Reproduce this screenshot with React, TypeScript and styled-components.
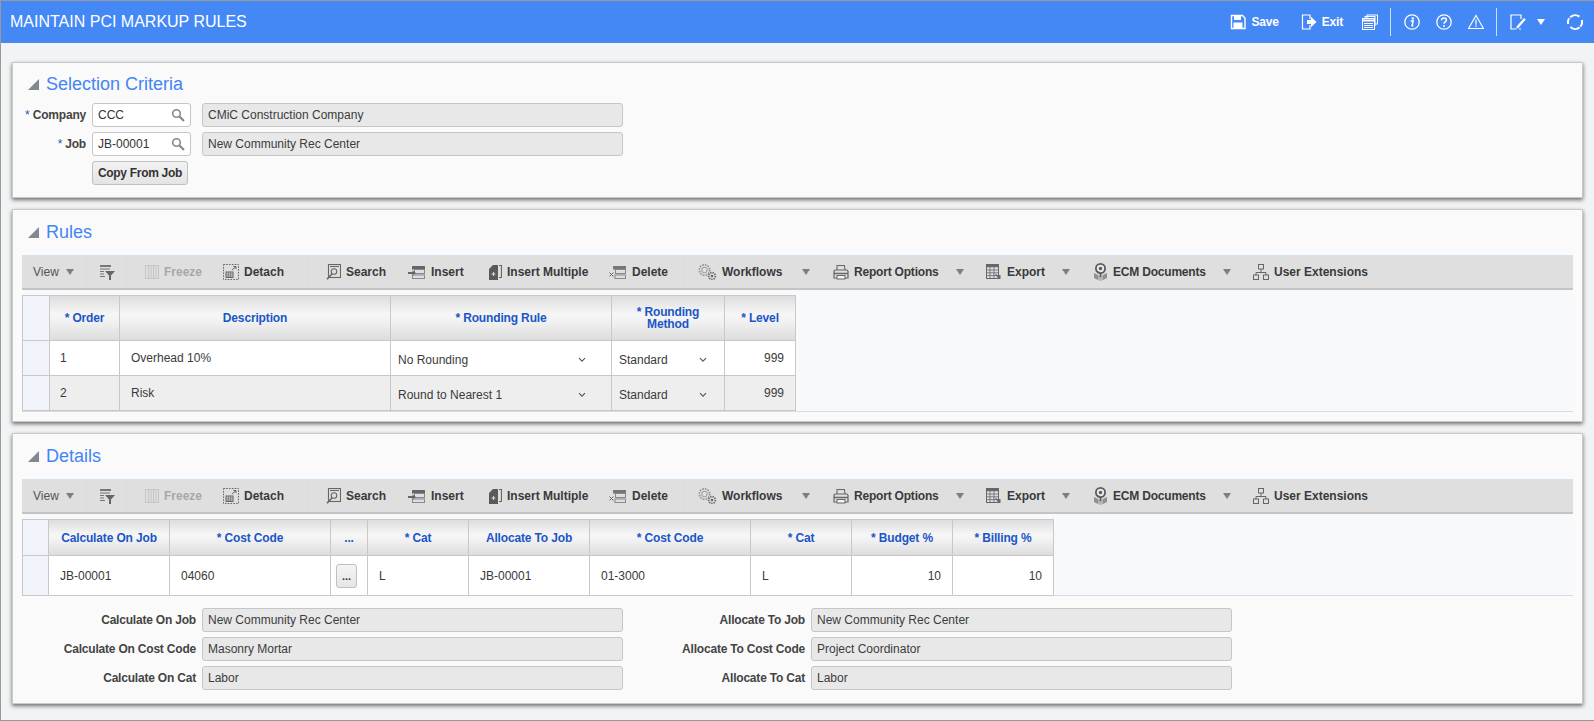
import React from "react";
import styled, { createGlobalStyle } from "styled-components";

const GlobalStyle = createGlobalStyle`
  html, body {
    margin: 0;
    padding: 0;
    background: #f1f3f4;
  }
  body {
    font-family: "Liberation Sans", Arial, sans-serif;
    font-size: 12px;
    color: #333;
  }
  * { box-sizing: border-box; }
`;

const Page = styled.div`
  width: 1594px;
  height: 721px;
  overflow: hidden;
  display: flex;
  flex-direction: column;
  background: #f1f3f4;
  border-left: 1px solid #999;
  border-top: 1px solid #999;
  border-bottom: 1px solid #999;
`;

const Header = styled.header`
  height: 42px;
  flex: none;
  display: flex;
  align-items: center;
  justify-content: space-between;
  padding: 0 11px 0 9px;
  background: #4488f6;
  color: #fff;
`;

const Title = styled.h1`
  margin: 0;
  font-size: 16px;
  font-weight: 400;
`;

const Actions = styled.div`
  display: flex;
  align-items: center;
`;

const HeadItem = styled.span<{ $ml?: number }>`
  display: flex;
  align-items: center;
  margin-left: ${(p) => p.$ml ?? 0}px;
  font-weight: 700;
  font-size: 12px;
  letter-spacing: -0.2px;
`;

const HeadSep = styled.span<{ $ml: number }>`
  width: 1px;
  height: 28px;
  margin-left: ${(p) => p.$ml}px;
  background: #cfe0fb;
`;

const Content = styled.main`
  flex: 1;
  display: flex;
  flex-direction: column;
  gap: 11px;
  padding: 19px 11px 0 11px;
`;

const Panel = styled.section<{ $h: number }>`
  height: ${(p) => p.$h}px;
  flex: none;
  padding: 0 9px;
  background: #fafafa;
  border: 1px solid #c9c9c9;
  box-shadow: 0 2px 4px rgba(0, 0, 0, 0.55);
`;

const PanelHead = styled.div<{ $h: number; $pt?: number }>`
  height: ${(p) => p.$h}px;
  display: flex;
  align-items: center;
  gap: 7px;
  padding: ${(p) => p.$pt ?? 0}px 0 0 6px;
  font-size: 18px;
  color: #4285f4;
`;

const Collapse = styled.span`
  width: 0;
  height: 0;
  border-style: solid;
  border-width: 0 0 11px 11px;
  border-color: transparent transparent #808890 transparent;
`;

const FormRows = styled.div`
  display: flex;
  flex-direction: column;
  gap: 5px;
`;

const Row = styled.div`
  display: flex;
  align-items: center;
  height: 24px;
`;

const Label = styled.label<{ $w: number }>`
  width: ${(p) => p.$w}px;
  flex: none;
  margin-right: 6px;
  text-align: right;
  font-weight: 700;
  letter-spacing: -0.2px;
  color: #444;
  white-space: nowrap;
  em {
    font-style: normal;
    font-weight: 400;
    color: #1f55b8;
  }
`;

const LovInput = styled.div`
  width: 99px;
  height: 24px;
  margin-right: 11px;
  flex: none;
  display: flex;
  align-items: center;
  justify-content: space-between;
  padding: 0 5px 0 5px;
  background: #fff;
  border: 1px solid #c6c6c6;
  border-radius: 3px;
  color: #333;
`;

const ReadOnly = styled.div`
  width: 421px;
  height: 24px;
  flex: none;
  display: flex;
  align-items: center;
  padding: 0 5px;
  background: #e8e8e8;
  border: 1px solid #c6c6c6;
  border-radius: 3px;
  color: #3c3c3c;
`;

const Button = styled.button`
  width: 96px;
  height: 24px;
  margin-left: 70px;
  padding: 0;
  background: linear-gradient(#f2f2f2, #e4e4e4);
  border: 1px solid #c0c0c0;
  border-radius: 3px;
  font-family: inherit;
  font-size: 12px;
  font-weight: 700;
  letter-spacing: -0.3px;
  color: #333;
`;

const Toolbar = styled.div`
  height: 35px;
  display: flex;
  align-items: center;
  padding-left: 11px;
  background: #dfdfdf;
  border-top: 1px solid #d3e2f2;
  border-bottom: 2px solid #c4c4c4;
`;

const Tool = styled.span<{ $w: number; $pad?: number; $off?: boolean; $plain?: boolean; $tight?: boolean }>`
  width: ${(p) => p.$w}px;
  flex: none;
  height: 100%;
  display: flex;
  align-items: center;
  gap: ${(p) => (p.$plain ? 0 : 5)}px;
  padding-left: ${(p) => p.$pad ?? 0}px;
  font-weight: ${(p) => (p.$plain ? 400 : 700)};
  letter-spacing: ${(p) => (p.$tight ? "-0.2px" : "normal")};
  color: ${(p) => (p.$off ? "#a8a8a8" : p.$plain ? "#555" : "#3a3a3a")};
`;

const ToolSep = styled.span`
  width: 1px;
  height: 100%;
  flex: none;
  background: #d5dde6;
`;

const Caret = styled.i<{ $ml: number; $color?: string; $w?: number }>`
  width: 0;
  height: 0;
  flex: none;
  margin-left: ${(p) => p.$ml}px;
  border-style: solid;
  border-width: 6px ${(p) => p.$w ?? 4}px 0 ${(p) => p.$w ?? 4}px;
  border-color: ${(p) => p.$color ?? "#7f7f7f"} transparent transparent transparent;
`;

const GridArea = styled.div<{ $h: number }>`
  height: ${(p) => p.$h}px;
  padding-top: 5px;
  background: #f7f9fd;
  border-bottom: 1px solid #d8dde3;
`;

const Table = styled.table`
  border-collapse: collapse;
  table-layout: fixed;
`;

const Th = styled.th<{ $h: number; $w: number }>`
  height: ${(p) => p.$h}px;
  width: ${(p) => p.$w}px;
  padding: 0 4px;
  background: linear-gradient(#dedede 0%, #f6f6f6 40%, #f2f2f2 55%, #dcdcdc 100%);
  border: 1px solid #c8c8c8;
  font-size: 12px;
  line-height: 12px;
  font-weight: 700;
  letter-spacing: -0.15px;
  color: #1a56c8;
`;

const Corner = styled.td<{ $w?: number }>`
  width: ${(p) => p.$w ?? 26}px;
  padding: 0;
  background: #f1f4fa;
  border: 1px solid #c8c8c8;
`;

const Td = styled.td<{ $h: number; $alt?: boolean; $right?: boolean; $pad?: number }>`
  height: ${(p) => p.$h}px;
  padding: 0 ${(p) => p.$pad ?? 11}px;
  background: ${(p) => (p.$alt ? "#eeeeee" : "#fff")};
  border: 1px solid #c8c8c8;
  text-align: ${(p) => (p.$right ? "right" : "left")};
  color: #3a3a3a;
`;

const SelectText = styled.div`
  display: flex;
  align-items: center;
  justify-content: space-between;
  padding-top: 3px;
`;

const EllipsisBtn = styled.button`
  display: block;
  width: 21px;
  height: 24px;
  margin: 0 0 0 5px;
  padding: 0;
  background: linear-gradient(#f4f4f4, #e6e6e6);
  border: 1px solid #c0c0c0;
  border-radius: 3px;
  font-size: 11px;
  font-weight: 700;
  color: #333;
`;

const Details = styled.div`
  display: grid;
  grid-template-columns: 600px 620px;
  margin-top: 12px;
  row-gap: 5px;
`;

const ChevronMark = styled.svg<{ $mr: number }>`
  flex: none;
  margin-right: ${(p) => p.$mr}px;
`;

const Svg = ({ w = 16, h = 16, children, c = "#666" }: { w?: number; h?: number; c?: string; children: React.ReactNode }) => (
  <svg width={w} height={h} viewBox={`0 0 ${w} ${h}`} fill="none" stroke={c} strokeWidth="1" style={{ flex: "none" }}>
    {children}
  </svg>
);

const Chevron = ({ mr }: { mr: number }) => (
  <ChevronMark $mr={mr} width="8" height="6" viewBox="0 0 8 6" fill="none" stroke="#555" strokeWidth="1.1">
    <path d="M1 1.2 4 4.2 7 1.2" />
  </ChevronMark>
);

const SearchGlass = () => (
  <Svg w={14} h={14} c="#888">
    <circle cx="5.5" cy="5.5" r="3.8" strokeWidth="1.6" />
    <path d="M8.5 8.5 13 13" strokeWidth="2.2" />
  </Svg>
);

const W = "#fff";

const SaveIcon = () => (
  <Svg c={W}>
    <path d="M1.5 1.5h11l2.5 2.5v10.5h-13.5z" strokeWidth="1.4" />
    <rect x="4" y="1.5" width="7" height="4.5" fill={W} stroke="none" />
    <rect x="3.5" y="8.5" width="9" height="6" fill={W} stroke="none" />
  </Svg>
);
const ExitIcon = () => (
  <Svg c={W}>
    <path d="M9 5V1H1.5v14H9v-4" strokeWidth="1.2" />
    <path d="M6 6h4V2.8L15.5 8 10 13.2V10H6z" fill={W} stroke="none" />
  </Svg>
);
const ReportsIcon = () => (
  <Svg c={W}>
    <rect x="5" y="1" width="10.5" height="9" />
    <rect x="3" y="2.5" width="10" height="9" />
    <rect x="0.5" y="4.5" width="12" height="11" fill="#4488f6" />
    <path d="M0.5 6.5h12" strokeWidth="2" />
    <path d="M2 9.5h9M2 11.5h9M2 13.5h9" />
  </Svg>
);
const InfoIcon = () => (
  <Svg c={W}>
    <circle cx="8" cy="8" r="7.2" strokeWidth="1.3" />
    <circle cx="8.8" cy="4.4" r="1.2" fill={W} stroke="none" />
    <path d="M6.6 7h2.6l-1.2 4.8h1.4" strokeWidth="1.5" />
  </Svg>
);
const HelpIcon = () => (
  <Svg c={W}>
    <circle cx="8" cy="8" r="7.2" strokeWidth="1.3" />
    <path d="M5.6 6.2C5.6 4.8 6.7 4 8 4s2.4.8 2.4 2.1c0 1.8-2.4 1.9-2.4 3.6" strokeWidth="1.6" />
    <circle cx="8" cy="12" r="1" fill={W} stroke="none" />
  </Svg>
);
const WarnIcon = () => (
  <Svg c={W}>
    <path d="M8 1.5 15.5 14.5H.5z" strokeWidth="1.2" />
    <path d="M8 5.5v5.2M8 11.6v1.5" strokeWidth="1.2" />
  </Svg>
);
const EditIcon = () => (
  <Svg c={W}>
    <path d="M11 5V1H1v14h5M9 15h2" strokeWidth="1.2" />
    <path d="M6 15l1-3 7-8 1.8 1.6-7 8z" fill={W} stroke="none" />
  </Svg>
);
const RefreshIcon = () => (
  <Svg c={W}>
    <path d="M3.2 3.2A7 7 0 0 1 12.4 2.6M14.8 6A7 7 0 0 1 13.4 12.6M12.6 13.4A7 7 0 0 1 3.4 13M1.2 10A7 7 0 0 1 2.2 4.2" strokeWidth="2" />
  </Svg>
);

const FilterIcon = () => (
  <Svg>
    <path d="M1 1h11v2H1z" fill="#777" stroke="none" />
    <path d="M1 5h10M1 7.5h4M1 10h4M1 12.5h5" strokeWidth="1.2" stroke="#777" />
    <path d="M6 7h10l-4 4.5V16h-2v-4.5z" fill="#666" stroke="none" />
  </Svg>
);
const FreezeIcon = () => (
  <Svg w={14} c="#c4c4c4">
    <rect x="0.5" y="1.5" width="13" height="13" />
    <path d="M3.5 2v12M6 2v12M8.5 2v12M11 2v12" />
  </Svg>
);
const DetachIcon = () => (
  <Svg>
    <rect x="0.5" y="0.5" width="15" height="15" strokeDasharray="1.6 1.2" />
    <path d="M9 6 13 2.5M10.5 2.5H13V5" />
    <rect x="3" y="8" width="7" height="5.5" />
    <path d="M3 10h7M3 12h7M5.3 8v5.5M7.6 8v5.5" strokeWidth="0.7" />
  </Svg>
);
const SearchDocIcon = () => (
  <Svg w={15}>
    <rect x="2.5" y="0.5" width="12" height="13" strokeWidth="1.1" />
    <path d="M4 2.5h9" />
    <circle cx="8" cy="7.5" r="2.8" strokeWidth="1.1" />
    <path d="M6 10 1 15.2" strokeWidth="1.6" />
  </Svg>
);
const InsertIcon = () => (
  <Svg w={18}>
    <rect x="4" y="2" width="13" height="3.5" fill="#666" stroke="none" />
    <rect x="6.5" y="5.5" width="10" height="4" stroke="#888" />
    <rect x="4.5" y="11" width="12" height="3.5" stroke="#888" />
    <path d="M0 9h5" strokeWidth="2" />
    <path d="M4.5 6.5 8 9l-3.5 2.5z" fill="#666" stroke="none" />
  </Svg>
);
const InsertMultipleIcon = () => (
  <Svg w={14}>
    <path d="M11 1.5h2.5v12H11" strokeWidth="1.2" />
    <path d="M1 5 5 1h5v15H1z" fill="#5a5a5a" stroke="none" />
    <path d="M5.5 8v4M3.5 10h4" stroke="#ddd" />
  </Svg>
);
const DeleteIcon = () => (
  <Svg w={18}>
    <rect x="4" y="2" width="13" height="3.5" fill="#777" stroke="none" />
    <rect x="6.5" y="5.5" width="10" height="4" stroke="#888" />
    <rect x="6" y="11" width="10.5" height="3.5" stroke="#888" />
    <path d="M0.5 8.5 4.5 12.5M4.5 8.5 0.5 12.5" />
  </Svg>
);
const WorkflowIcon = () => (
  <Svg w={19}>
    <circle cx="6.5" cy="6" r="5.2" stroke="#8f8f8f" strokeWidth="1.6" strokeDasharray="1.6 1.1" />
    <circle cx="6.5" cy="6" r="2.8" stroke="#8f8f8f" strokeWidth="0.9" />
    <circle cx="14" cy="12" r="3.4" stroke="#666" strokeWidth="1.6" strokeDasharray="1.4 .9" />
    <circle cx="14" cy="12" r="1.3" fill="#666" stroke="none" />
  </Svg>
);
const PrinterIcon = () => (
  <Svg>
    <path d="M4 6V1.5h7.5L12 6" strokeWidth="1.1" />
    <path d="M1 14V7.5Q1 6 2.5 6h11Q15 6 15 7.5V14z" strokeWidth="1.2" />
    <path d="M1 9.5h14" strokeWidth="1.5" />
    <rect x="4" y="11.5" width="8" height="3.5" fill="#f3f3f3" />
  </Svg>
);
const ExportIcon = () => (
  <Svg>
    <rect x="0.5" y="0.5" width="12" height="14" strokeWidth="1" />
    <path d="M0.5 2h12" strokeWidth="2.4" />
    <path d="M0.5 6h12M0.5 8.8h12M0.5 11.6h12M4 3v11.5M8 3v11.5" strokeWidth="0.8" />
    <path d="M9.5 10.5 14 14M13.8 11v3.2h-3" strokeWidth="1.4" />
  </Svg>
);
const EcmIcon = () => (
  <Svg w={15} h={18}>
    <path d="M1 10 5 12v5l-4-2zM14 10l-4 2v5l4-2z" fill="#8f8f8f" stroke="none" />
    <path d="M5 12l2.5 1.5L10 12v5l-2.5 1L5 17z" fill="#b5b5b5" stroke="none" />
    <circle cx="7.5" cy="5.5" r="4.6" strokeWidth="1.8" stroke="#5c5c5c" fill="#e8e8e8" />
    <circle cx="7.5" cy="5.5" r="1.7" fill="#5c5c5c" stroke="none" />
    <path d="M7.5 10v4" strokeWidth="1.8" stroke="#5c5c5c" />
  </Svg>
);
const ExtensionsIcon = () => (
  <Svg>
    <rect x="5.5" y="0.5" width="5" height="4.5" />
    <rect x="0.5" y="11" width="5" height="4.5" />
    <rect x="10.5" y="11" width="5" height="4.5" />
    <path d="M8 5v3.5M3 11V8.5h10V11" />
  </Svg>
);

function GridToolbar() {
  return (
    <Toolbar>
      <Tool $w={53} $plain>
        View
        <Caret $ml={7} />
      </Tool>
      <ToolSep />
      <Tool $w={39} $pad={12}>
        <FilterIcon />
      </Tool>
      <ToolSep />
      <Tool $w={96} $pad={18} $off>
        <FreezeIcon />
        Freeze
      </Tool>
      <Tool $w={85}>
        <DetachIcon />
        Detach
      </Tool>
      <ToolSep />
      <Tool $w={99} $pad={17}>
        <SearchDocIcon />
        Search
      </Tool>
      <Tool $w={80}>
        <InsertIcon />
        Insert
      </Tool>
      <Tool $w={121}>
        <InsertMultipleIcon />
        Insert Multiple
      </Tool>
      <Tool $w={74}>
        <DeleteIcon />
        Delete
      </Tool>
      <ToolSep />
      <Tool $w={149} $pad={14}>
        <WorkflowIcon />
        Workflows
        <Caret $ml={15} />
      </Tool>
      <Tool $w={153} $tight>
        <PrinterIcon />
        Report Options
        <Caret $ml={12} />
      </Tool>
      <Tool $w={107}>
        <ExportIcon />
        Export
        <Caret $ml={12} />
      </Tool>
      <Tool $w={160} $tight>
        <EcmIcon />
        ECM Documents
        <Caret $ml={12} />
      </Tool>
      <Tool $w={120}>
        <ExtensionsIcon />
        User Extensions
      </Tool>
    </Toolbar>
  );
}

const rules = [
  { order: 1, description: "Overhead 10%", rule: "No Rounding", method: "Standard", level: 999 },
  { order: 2, description: "Risk", rule: "Round to Nearest 1", method: "Standard", level: 999 },
];

const detailFields = [
  ["Calculate On Job", "New Community Rec Center", "Allocate To Job", "New Community Rec Center"],
  ["Calculate On Cost Code", "Masonry Mortar", "Allocate To Cost Code", "Project Coordinator"],
  ["Calculate On Cat", "Labor", "Allocate To Cat", "Labor"],
];

export default function App() {
  return (
    <>
      <GlobalStyle />
      <Page>
        <Header>
          <Title>MAINTAIN PCI MARKUP RULES</Title>
          <Actions>
            <HeadItem><SaveIcon /></HeadItem>
            <HeadItem $ml={6}>Save</HeadItem>
            <HeadItem $ml={22}><ExitIcon /></HeadItem>
            <HeadItem $ml={5}>Exit</HeadItem>
            <HeadItem $ml={19}><ReportsIcon /></HeadItem>
            <HeadSep $ml={12} />
            <HeadItem $ml={13}><InfoIcon /></HeadItem>
            <HeadItem $ml={16}><HelpIcon /></HeadItem>
            <HeadItem $ml={16}><WarnIcon /></HeadItem>
            <HeadSep $ml={12} />
            <HeadItem $ml={13}><EditIcon /></HeadItem>
            <Caret $ml={11} $color="#fff" $w={4.5} />
            <HeadItem $ml={22}><RefreshIcon /></HeadItem>
          </Actions>
        </Header>
        <Content>
          <Panel $h={136}>
            <PanelHead $h={40} $pt={2}>
              <Collapse />
              Selection Criteria
            </PanelHead>
            <FormRows>
              <Row>
                <Label $w={64}><em>* </em>Company</Label>
                <LovInput>CCC<SearchGlass /></LovInput>
                <ReadOnly>CMiC Construction Company</ReadOnly>
              </Row>
              <Row>
                <Label $w={64}><em>* </em>Job</Label>
                <LovInput>JB-00001<SearchGlass /></LovInput>
                <ReadOnly>New Community Rec Center</ReadOnly>
              </Row>
              <Row>
                <Button>Copy From Job</Button>
              </Row>
            </FormRows>
          </Panel>

          <Panel $h={213}>
            <PanelHead $h={45}>
              <Collapse />
              Rules
            </PanelHead>
            <GridToolbar />
            <GridArea $h={122}>
              <Table>
                <thead>
                  <tr>
                    <Corner $w={27} />
                    <Th $h={45} $w={70}>* Order</Th>
                    <Th $h={45} $w={271}>Description</Th>
                    <Th $h={45} $w={221}>* Rounding Rule</Th>
                    <Th $h={45} $w={113}>* Rounding Method</Th>
                    <Th $h={45} $w={71}>* Level</Th>
                  </tr>
                </thead>
                <tbody>
                  {rules.map((r, i) => (
                    <tr key={r.order}>
                      <Corner $w={27} />
                      <Td $h={35} $alt={i === 1} $pad={10}>{r.order}</Td>
                      <Td $h={35} $alt={i === 1}>{r.description}</Td>
                      <Td $h={35} $alt={i === 1} $pad={7}>
                        <SelectText>{r.rule}<Chevron mr={18} /></SelectText>
                      </Td>
                      <Td $h={35} $alt={i === 1} $pad={7}>
                        <SelectText>{r.method}<Chevron mr={10} /></SelectText>
                      </Td>
                      <Td $h={35} $alt={i === 1} $right>{r.level}</Td>
                    </tr>
                  ))}
                </tbody>
              </Table>
            </GridArea>
          </Panel>

          <Panel $h={271}>
            <PanelHead $h={45}>
              <Collapse />
              Details
            </PanelHead>
            <GridToolbar />
            <GridArea $h={82}>
              <Table>
                <thead>
                  <tr>
                    <Corner />
                    <Th $h={36} $w={121}>Calculate On Job</Th>
                    <Th $h={36} $w={161}>* Cost Code</Th>
                    <Th $h={36} $w={37}>...</Th>
                    <Th $h={36} $w={101}>* Cat</Th>
                    <Th $h={36} $w={121}>Allocate To Job</Th>
                    <Th $h={36} $w={161}>* Cost Code</Th>
                    <Th $h={36} $w={101}>* Cat</Th>
                    <Th $h={36} $w={101}>* Budget %</Th>
                    <Th $h={36} $w={101}>* Billing %</Th>
                  </tr>
                </thead>
                <tbody>
                  <tr>
                    <Corner />
                    <Td $h={40}>JB-00001</Td>
                    <Td $h={40}>04060</Td>
                    <Td $h={40} $pad={0}><EllipsisBtn>...</EllipsisBtn></Td>
                    <Td $h={40}>L</Td>
                    <Td $h={40}>JB-00001</Td>
                    <Td $h={40}>01-3000</Td>
                    <Td $h={40}>L</Td>
                    <Td $h={40} $right>10</Td>
                    <Td $h={40} $right>10</Td>
                  </tr>
                </tbody>
              </Table>
            </GridArea>
            <Details>
              {detailFields.map((f) => (
                <React.Fragment key={f[0]}>
                  <Row>
                    <Label $w={174}>{f[0]}</Label>
                    <ReadOnly>{f[1]}</ReadOnly>
                  </Row>
                  <Row>
                    <Label $w={183}>{f[2]}</Label>
                    <ReadOnly>{f[3]}</ReadOnly>
                  </Row>
                </React.Fragment>
              ))}
            </Details>
          </Panel>
        </Content>
      </Page>
    </>
  );
}
